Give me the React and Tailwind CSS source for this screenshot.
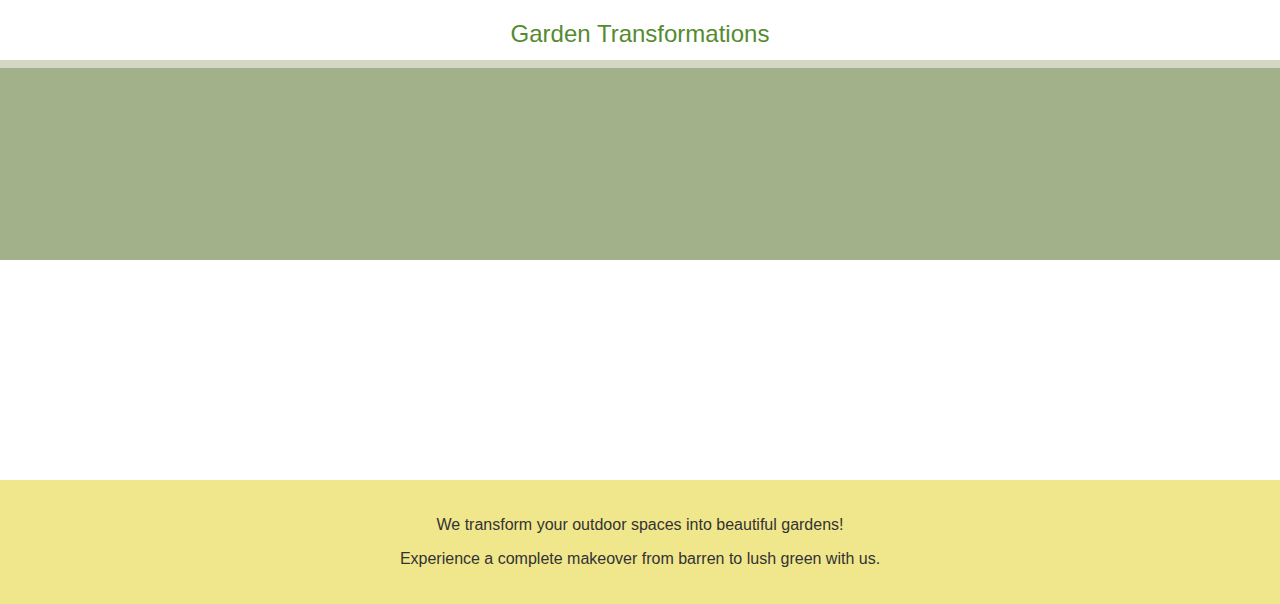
export default function App() {
  return (
    <div className="min-h-[604px] bg-white font-['Liberation_Sans',Arial,sans-serif]">
      <header className="h-[60px] pt-[20px] text-center">
        <h1 className="text-[24px] leading-[28px] text-[#558b2f]">Garden Transformations</h1>
      </header>
      <div className="h-[8px] bg-[#d2d8c4]" />
      <section className="h-[192px] bg-[#a3b18a]" />
      <section className="h-[220px] bg-white" />
      <footer className="h-[124px] bg-[#f0e68c] pt-[36px] text-center text-[16px] leading-[18px] text-[#333333]">
        <p>We transform your outdoor spaces into beautiful gardens!</p>
        <p className="mt-[16px]">Experience a complete makeover from barren to lush green with us.</p>
      </footer>
    </div>
  )
}
